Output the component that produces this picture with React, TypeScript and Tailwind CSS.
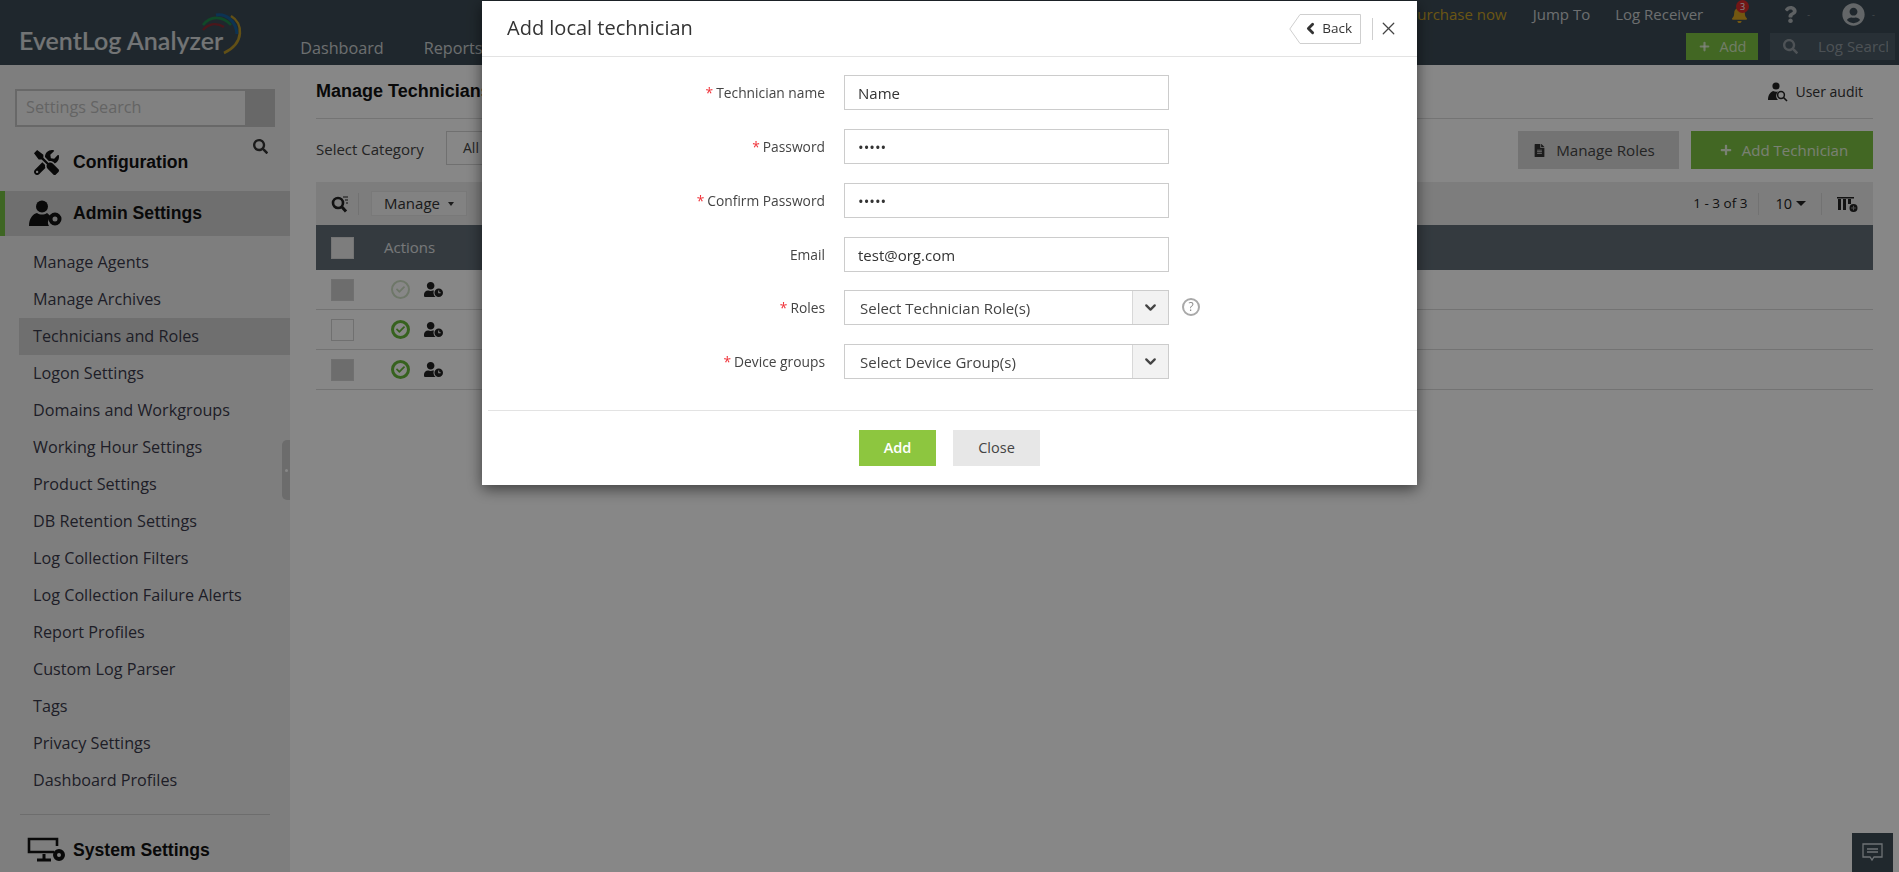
import { ChevronDown, ChevronLeft, Plus, X } from "lucide-react";
import { FaBell, FaCheck, FaFileAlt, FaPlus, FaQuestion, FaSearch, FaTools, FaUserCircle, FaUserClock } from "react-icons/fa";

const settingsLinks = [
  "Manage Agents",
  "Manage Archives",
  "Technicians and Roles",
  "Logon Settings",
  "Domains and Workgroups",
  "Working Hour Settings",
  "Product Settings",
  "DB Retention Settings",
  "Log Collection Filters",
  "Log Collection Failure Alerts",
  "Report Profiles",
  "Custom Log Parser",
  "Tags",
  "Privacy Settings",
  "Dashboard Profiles",
];

function LogoArcs() {
  return (
    <svg width="46" height="42" viewBox="0 0 46 42" fill="none" className="absolute left-[200px] top-[13px]">
      <path d="M3 17C8 11 16 9 24 14" stroke="#8c2a33" strokeWidth="2.4" />
      <path d="M3 12C10 3 22 2 31 12" stroke="#1f8a4c" strokeWidth="2.6" />
      <path d="M16 2C26 0 36 8 37 21" stroke="#17609e" strokeWidth="3" />
      <path d="M31 3C43 10 45 30 24 40" stroke="#b9982a" strokeWidth="2.6" />
    </svg>
  );
}

function UserGearIcon() {
  return (
    <svg width="33" height="27" viewBox="0 0 33 27" fill="#111">
      <circle cx="13" cy="6.5" r="6" />
      <path d="M0 26c0-8 4-12 8-13 3 2 7 2 10 0 1 1 3 2 4 4-3 2-4 6-2 9z" />
      <circle cx="26" cy="19" r="4.5" fill="none" stroke="#111" strokeWidth="4" />
    </svg>
  );
}

function MonitorGearIcon() {
  return (
    <svg width="40" height="26" viewBox="0 0 40 26" fill="none">
      <path d="M27 15H2V2h28v7" stroke="#111" strokeWidth="2.6" />
      <path d="M10 23h14M17 17v5" stroke="#111" strokeWidth="3" />
      <circle cx="32" cy="18" r="4" stroke="#111" strokeWidth="4" />
    </svg>
  );
}

function AuditIcon() {
  return (
    <svg width="20" height="20" viewBox="0 0 20 20">
      <circle cx="8" cy="4" r="3.6" fill="#222" />
      <path d="M0 18c0-6 3-8 5-9 2 1 5 1 6 0-3 2-4 6-1 9z" fill="#222" />
      <circle cx="13" cy="13" r="3.4" fill="none" stroke="#222" strokeWidth="1.5" />
      <path d="M15.5 15.5 19 19" stroke="#222" strokeWidth="1.6" />
    </svg>
  );
}

function FilterSearchIcon() {
  return (
    <svg width="18" height="18" viewBox="0 0 18 18" fill="none">
      <circle cx="7" cy="8" r="5" stroke="#222" strokeWidth="2.6" />
      <path d="m10.5 11.5 4.5 5" stroke="#222" strokeWidth="3" />
      <path d="M12 2h5M14 5h3M15 8h2" stroke="#222" strokeWidth="1" />
    </svg>
  );
}

function ColumnsIcon() {
  return (
    <svg width="21" height="18" viewBox="0 0 21 18">
      <path d="M0 2h17v1.5H0zM1 4h3v11H1zM6 4h3v11H6zM11 4h3v5h-3z" fill="#222" />
      <circle cx="16.5" cy="13" r="4" fill="#222" />
      <path d="M14.2 13h4.6M16.5 10.7v4.6" stroke="#999" strokeWidth="1.1" />
    </svg>
  );
}

function ChatIcon() {
  return (
    <svg width="21" height="19" viewBox="0 0 21 19" fill="none" stroke="#6d7275" strokeWidth="1.3">
      <path d="M1 1h19v13h-8l-2 3-2-3H1z" />
      <path d="M5 6h11M5 9h11" />
    </svg>
  );
}

function StatusIcon({ faded }: { faded?: boolean }) {
  return (
    <span
      className={`w-[19px] h-[19px] rounded-full flex items-center justify-center ${
        faded ? "border-2 border-[#d0e0c6] text-[#d0e0c6]" : "border-[3px] border-[#66b93a] text-[#66b93a]"
      }`}
    >
      <FaCheck size={9} />
    </span>
  );
}

function TableRow({ faded, shaded }: { faded?: boolean; shaded?: boolean }) {
  return (
    <div className="flex items-center h-10 border-b border-[#d9d9d9]">
      <span className={`ml-[15px] w-[23px] h-[22px] border border-[#d4d4d4] ${shaded ? "bg-[#cfcfcf]" : "bg-white"}`} />
      <div className="ml-[37px] flex items-center gap-[14px]">
        <StatusIcon faded={faded} />
        <FaUserClock size={19} className="text-[#222]" />
      </div>
    </div>
  );
}

function Sidebar() {
  return (
    <aside className="w-[290px] shrink-0 bg-[#efefef] flex flex-col overflow-hidden">
      <div className="shrink-0 mt-6 mx-[15px] h-[38px] flex border-2 border-[#c4c4c4] bg-[#c4c4c4]">
        <div className="w-[228px] bg-[#f4f4f4] pl-[9px] text-[16.2px] leading-[33px] text-[#bdbdbd]">Settings Search</div>
      </div>
      <div className="shrink-0 flex justify-end pr-[22px] mt-3 h-0">
        <FaSearch size={15} className="text-[#333]" />
      </div>
      <div className="shrink-0 h-[52px] flex items-center pb-[6px]">
        <span className="w-[73px] pl-[34px]">
          <FaTools size={25} className="text-[#111]" />
        </span>
        <span className="font-['Liberation_Sans',sans-serif] text-[17.6px] font-bold text-[#111]">Configuration</span>
      </div>
      <div className="shrink-0 h-[45px] flex items-center bg-[#d2d2d2] border-l-[5px] border-[#75c043]">
        <span className="w-[68px] pl-6">
          <UserGearIcon />
        </span>
        <span className="font-['Liberation_Sans',sans-serif] text-[17.6px] font-bold text-[#111]">Admin Settings</span>
      </div>
      <ul className="shrink-0 mt-[8px] ml-[19px]">
        {settingsLinks.map((link) => (
          <li
            key={link}
            className={`h-[37px] pl-[14px] text-[16.2px] leading-[37px] text-[#3a3a4a] ${
              link === "Technicians and Roles" ? "bg-[#d2d2d2]" : ""
            }`}
          >
            {link}
          </li>
        ))}
      </ul>
      <div className="shrink-0 mt-[15px] mx-5 border-t border-[#cfcfcf]" />
      <div className="shrink-0 h-[70px] flex items-center pl-[27px]">
        <span className="w-[46px]">
          <MonitorGearIcon />
        </span>
        <span className="font-['Liberation_Sans',sans-serif] text-[17.6px] font-bold text-[#111]">System Settings</span>
      </div>
    </aside>
  );
}

function MainPanel() {
  return (
    <main className="relative flex-1 bg-white pl-[26px] pr-[26px]">
      <div className="h-[54px] flex items-center justify-between border-b border-[#dcdcdc]">
        <h1 className="font-['Liberation_Sans',sans-serif] text-[18px] font-bold text-[#111] whitespace-nowrap">Manage Technicians</h1>
        <div className="flex items-center gap-[7px] pr-[10px] text-[14px] text-[#333]">
          <AuditIcon />
          <span>User audit</span>
        </div>
      </div>
      <div className="mt-3 h-[38px] flex items-center">
        <span className="text-[15px] text-[#444] w-[130px] -mt-[2px]">Select Category</span>
        <div className="w-[200px] h-[34px] -mt-1 border border-[#d4d4d4] pl-4 text-[14px] leading-[32px] text-[#444]">All</div>
        <div className="ml-auto flex gap-3">
          <div className="w-[161px] h-[38px] bg-[#d9d9d9] flex items-center justify-center gap-[10px] pr-[9px] text-[15.2px] text-[#444]">
            <FaFileAlt size={13} className="text-[#333]" />
            Manage Roles
          </div>
          <div className="w-[182px] h-[38px] bg-[#7dc242] flex items-center justify-center gap-[10px] pl-[4px] text-[15px] text-white/80">
            <FaPlus size={12} />
            Add Technician
          </div>
        </div>
      </div>
      <div className="mt-[13px] h-[43px] bg-[#ececec] flex items-center pl-[15px] pr-[15px]">
        <FilterSearchIcon />
        <span className="ml-[9px] h-[22px] border-l border-[#d8d8d8]" />
        <div className="ml-3 w-[96px] h-[25px] bg-[#f5f5f5] border border-[#e4e4e4] flex items-center justify-center gap-2 text-[15px] text-[#333]">
          Manage
          <span className="border-x-[3.5px] border-t-[4px] border-x-transparent border-t-[#333]" />
        </div>
        <div className="ml-auto flex items-center text-[13.5px] text-[#222]">
          <span>1 - 3 of 3</span>
          <span className="ml-[11px] h-[22px] border-l border-[#d8d8d8]" />
          <span className="ml-[16px] text-[14.5px]">10</span>
          <span className="ml-1 border-x-[5px] border-t-[5px] border-x-transparent border-t-[#222]" />
          <span className="ml-[15px] h-[22px] border-l border-[#d8d8d8]" />
          <span className="ml-[15px]">
            <ColumnsIcon />
          </span>
        </div>
      </div>
      <div className="h-[45px] bg-[#626e78] flex items-center text-[15px] text-white/80">
        <span className="ml-[15px] w-[23px] h-[22px] bg-[#ececec] border border-[#dcdcdc]" />
        <span className="ml-[30px]">Actions</span>
      </div>
      <TableRow faded shaded />
      <TableRow />
      <TableRow shaded />
      {/* collapse handle of the sidebar */}
      <div className="absolute left-[-8px] top-[375px] w-2 h-[60px] bg-[#cccccc] rounded-l-[5px] flex items-center justify-center">
        <span className="w-[3px] h-[3px] rounded-full bg-white" />
      </div>
    </main>
  );
}

function TopBar() {
  return (
    <header className="relative h-[65px] shrink-0 bg-[#3c4b55] flex">
      <span className="ml-[19px] mt-[25px] h-fit text-[25px] leading-[30px] font-['Lato',sans-serif] font-semibold text-white/80 whitespace-nowrap">
        EventLog Analyzer
      </span>
      <LogoArcs />
      <nav className="ml-[77px] mt-[36px] h-fit flex gap-10 text-[16.2px] text-white/75">
        <span>Dashboard</span>
        <span>Reports</span>
      </nav>
      <div className="ml-auto flex flex-col items-end">
        <div className="h-[29px] flex items-center text-[15px] text-white/75 pr-[24px]">
          <span className="text-[#c9a227]">Purchase now</span>
          <span className="ml-[26px]">Jump To</span>
          <span className="ml-[25px]">Log Receiver</span>
          <span className="relative ml-[28px] text-[#d9a520]">
            <FaBell size={17} />
            <span className="absolute -top-[6px] left-[5px] w-[13px] h-[13px] rounded-full bg-[#d92b2b] text-white text-[9px] leading-[13px] text-center">3</span>
          </span>
          <FaQuestion size={17} className="ml-[34px] text-white/60" />
          <span className="ml-[8px] text-[9px] text-white/40">-</span>
          <FaUserCircle size={23} className="ml-[32px] text-white/65" />
          <span className="ml-[7px] text-[9px] text-white/40">-</span>
        </div>
        <div className="mt-[4px] flex gap-3 pr-1">
          <div className="w-[72px] h-[27px] bg-[#7dc242] flex items-center justify-center gap-[9px] text-[14.5px] text-white/70">
            <Plus size={13} strokeWidth={4} />
            Add
          </div>
          <div className="w-[125px] h-[27px] bg-[#4c5b66] flex items-center pl-[13px] pr-[7px] text-[15px] text-white/40 whitespace-nowrap">
            <FaSearch size={15} className="shrink-0 mr-[20px]" />
            <span className="min-w-0 overflow-hidden">Log Search</span>
          </div>
        </div>
      </div>
    </header>
  );
}

function Field({ label, required, children }: { label: string; required?: boolean; children: React.ReactNode }) {
  return (
    <div className="flex items-center h-[35px]">
      <label className="w-[343px] mt-[2px] text-right text-[13.8px] text-[#444]">
        {required && <span className="text-[#f0333a] mr-[3px]">*</span>}
        {label}
      </label>
      <div className="ml-[19px]">{children}</div>
    </div>
  );
}

const inputClass = "block w-[325px] h-[35px] border border-[#cccccc] px-[13px] text-[15px] text-[#333] outline-none";

function SelectBox({ placeholder }: { placeholder: string }) {
  return (
    <div className="w-[325px] h-[35px] border border-[#cccccc] flex text-[15px] text-[#444]">
      <span className="flex-1 pl-[15px] leading-[34px]">{placeholder}</span>
      <span className="w-[36px] bg-[#f2f2f2] border-l border-[#d8d8d8] flex items-center justify-center">
        <ChevronDown size={17} strokeWidth={3.2} className="text-[#444]" />
      </span>
    </div>
  );
}

function TechnicianDialog() {
  return (
    <div className="fixed left-[482px] top-[1px] w-[935px] h-[484px] bg-white flex flex-col shadow-[0_4px_14px_rgba(0,0,0,0.55)]">
      <div className="h-[56px] shrink-0 flex items-center border-b border-[#e3e3e3] pl-[25px] pr-[18px]">
        <h2 className="text-[20px] text-[#333] -mt-[2px]">Add local technician</h2>
        <div className="relative ml-auto w-[72px] h-[30px] flex items-center justify-end gap-[3px] pr-[9px] text-[13.5px] text-[#333]">
          <svg width="72" height="30" viewBox="0 0 72 30" fill="none" className="absolute inset-0">
            <path d="M71.5.5H11L.8 15 11 29.5h60.5z" stroke="#cfcfcf" />
          </svg>
          <ChevronLeft size={17} strokeWidth={4} className="relative" />
          <span className="relative">Back</span>
        </div>
        <span className="ml-[11px] h-[22px] border-l border-[#cfcfcf]" />
        <X size={21} strokeWidth={1.4} className="ml-[5px] text-[#444]" />
      </div>
      <form className="pt-[18px] flex flex-col gap-[19px]">
        <Field label="Technician name" required>
          <input className={inputClass} type="text" defaultValue="Name" readOnly />
        </Field>
        <Field label="Password" required>
          <input className={inputClass} type="password" defaultValue="12345" readOnly />
        </Field>
        <Field label="Confirm Password" required>
          <input className={inputClass} type="password" defaultValue="12345" readOnly />
        </Field>
        <Field label="Email">
          <input className={inputClass} type="text" defaultValue="test@org.com" readOnly />
        </Field>
        <div className="-mt-px">
          <Field label="Roles" required>
            <div className="relative">
              <SelectBox placeholder="Select Technician Role(s)" />
              <span className="absolute left-[338px] top-[8px] w-[18px] h-[18px] rounded-full border-2 border-[#a9a9a9] text-[#8a8a8a] text-[12px] leading-[14px] text-center">?</span>
            </div>
          </Field>
        </div>
        <Field label="Device groups" required>
          <SelectBox placeholder="Select Device Group(s)" />
        </Field>
      </form>
      <div className="mt-[31px] ml-[6px] border-t border-[#e3e3e3] pt-[19px] flex justify-center gap-[17px] pr-[6px]">
        <button type="button" className="w-[77px] h-[36px] bg-[#8dc63f] text-white text-[14.5px] font-semibold">Add</button>
        <button type="button" className="w-[87px] h-[36px] bg-[#e7e7e7] text-[#444] text-[14.5px]">Close</button>
      </div>
    </div>
  );
}

export default function App() {
  return (
    <div className="relative h-screen flex flex-col overflow-hidden font-['Open_Sans',sans-serif]">
      <TopBar />
      <div className="flex flex-1 min-h-0">
        <Sidebar />
        <MainPanel />
      </div>
      <div className="fixed inset-0 bg-black/[0.47]" />
      <TechnicianDialog />
      <div className="fixed right-[6px] bottom-0 w-[41px] h-[39px] bg-[#20282d] flex items-center justify-center">
        <ChatIcon />
      </div>
    </div>
  );
}
